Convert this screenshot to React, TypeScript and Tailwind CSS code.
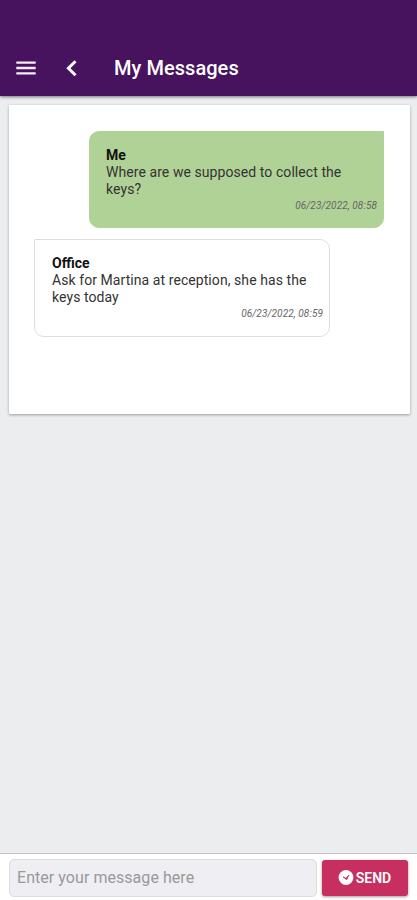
const messages = [
  {
    author: 'Me',
    text: 'Where are we supposed to collect the keys?',
    date: '06/23/2022, 08:58',
    own: true,
  },
  {
    author: 'Office',
    text: 'Ask for Martina at reception, she has the keys today',
    date: '06/23/2022, 08:59',
    own: false,
  },
]

function Header() {
  return (
    <header className="relative h-24 shrink-0 bg-[#47125e] pt-[41px] text-white shadow-[0_1px_3px_rgba(0,0,0,0.5)]">
      <div className="flex h-[54px] items-center pl-4">
        <button aria-label="Menu" className="h-5 w-5">
          <svg viewBox="0 0 20 20" className="h-5 w-5" stroke="#f4edf7" strokeWidth="2.3">
            <path d="M0.3 4.6H19.7M0.3 10H19.7M0.3 15.4H19.7" />
          </svg>
        </button>
        <button aria-label="Back" className="ml-[29px] h-5 w-3">
          <svg viewBox="0 0 12 20" className="h-5 w-3" fill="none" stroke="#fff" strokeWidth="3">
            <path d="M10.5 3.3L3.4 10.3L10.5 17.3" />
          </svg>
        </button>
        <h1 className="ml-[37px] text-[20px] leading-6 font-medium tracking-[0.05px]">My Messages</h1>
      </div>
    </header>
  )
}

function Message({ author, text, date, own }: (typeof messages)[number]) {
  return (
    <article
      className={
        own
          ? 'h-[97px] w-[295px] self-end rounded-[10px] rounded-tr-none border border-[#b1d296] bg-[#b1d296] pt-[15px] pr-1.5 pl-4'
          : 'h-[98px] w-[296px] self-start rounded-[10px] rounded-tl-none border border-[#dedede] bg-white pt-[15px] pr-1.5 pl-[17px]'
      }
    >
      <h2 className="text-[14px] leading-[17px] font-bold text-[#111]">{author}</h2>
      <p className="w-[260px] text-[14px] leading-[17px] tracking-[0.07px] text-[#333]">{text}</p>
      <time className="block text-right text-[10px] leading-4 tracking-[0.1px] text-[#666] italic">{date}</time>
    </article>
  )
}

function Composer() {
  return (
    <footer className="flex h-[47px] shrink-0 items-start gap-[5px] border-t border-[#c4c4c8] bg-white pt-[5px] pr-[9px] pl-[9px]">
      <input
        aria-label="Message"
        placeholder="Enter your message here"
        className="h-[38px] min-w-0 flex-1 rounded-[5px] border border-[#dddde0] bg-[#efeff3] px-[7px] pb-0.5 text-[16px] tracking-[0.05px] outline-none placeholder:text-[#999]"
      />
      <button className="mt-px flex h-9 w-[86px] items-center justify-center gap-0.5 rounded-[3px] bg-[#c62f60] pr-px text-[14px] font-semibold text-white shadow-[0_1px_3px_rgba(0,0,0,0.4)]">
        <svg viewBox="0 0 16 16" className="h-4 w-4">
          <circle cx="8" cy="7.5" r="7.4" fill="#fff" />
          <path d="M5 6.9L8 8.2L10.9 5L8.8 9.8L7.6 8.9Z" fill="#c62f60" stroke="#c62f60" strokeWidth="0.7" strokeLinejoin="round" />
        </svg>
        SEND
      </button>
    </footer>
  )
}

export default function App() {
  return (
    <div className="flex h-[900px] w-full flex-col overflow-hidden bg-[#ecedef] font-[Roboto,sans-serif]">
      <Header />
      <main className="flex-1 pt-[9px] pr-[7px] pl-[9px]">
        <section className="flex h-[309px] flex-col gap-[11px] rounded-[1px] bg-white pt-[26px] pr-[26px] pl-[25px] shadow-[0_1px_3px_rgba(0,0,0,0.35)]">
          {messages.map((message) => (
            <Message key={message.date} {...message} />
          ))}
        </section>
      </main>
      <Composer />
    </div>
  )
}
